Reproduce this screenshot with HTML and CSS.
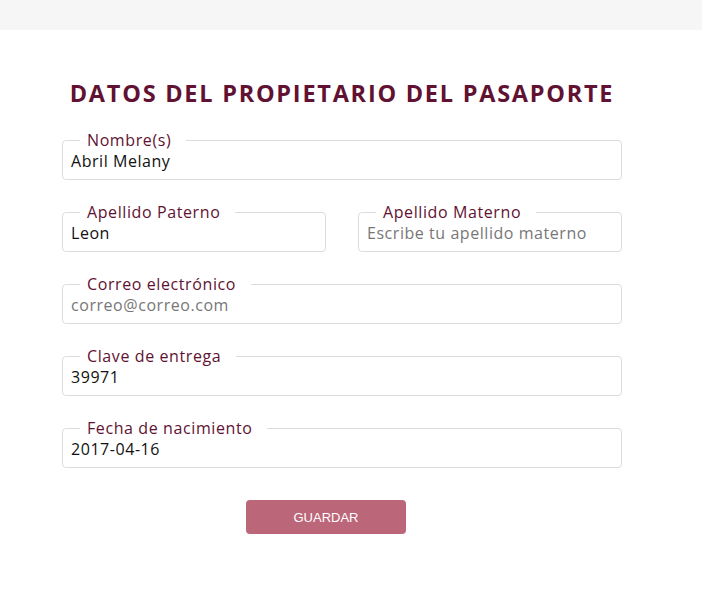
FILE: index.html
```html
<!DOCTYPE html>
<html lang="es">
<head>
<meta charset="utf-8">
<title>Datos del propietario</title>
<link rel="stylesheet" href="styles.css">
</head>
<body>
<div class="topbar"></div>
<main class="main">
  <h1 class="title">DATOS DEL PROPIETARIO DEL PASAPORTE</h1>
  <form class="form">
    <fieldset class="field">
      <legend class="label">Nombre(s)</legend>
      <input class="input" type="text" value="Abril Melany">
    </fieldset>
    <div class="row">
      <fieldset class="field">
        <legend class="label">Apellido Paterno</legend>
        <input class="input" type="text" value="Leon">
      </fieldset>
      <fieldset class="field">
        <legend class="label">Apellido Materno</legend>
        <input class="input" type="text" placeholder="Escribe tu apellido materno">
      </fieldset>
    </div>
    <fieldset class="field">
      <legend class="label">Correo electrónico</legend>
      <input class="input" type="email" placeholder="correo@correo.com">
    </fieldset>
    <fieldset class="field">
      <legend class="label">Clave de entrega</legend>
      <input class="input" type="text" value="39971">
    </fieldset>
    <fieldset class="field">
      <legend class="label">Fecha de nacimiento</legend>
      <input class="input" type="text" value="2017-04-16">
    </fieldset>
    <div class="actions">
      <button class="btn" type="button">GUARDAR</button>
    </div>
  </form>
</main>
</body>
</html>
```
FILE: styles.css
```css
* { box-sizing: border-box; }
body {
  margin: 0;
  background: #fff;
  font-family: "Open Sans", "DejaVu Sans", sans-serif;
  color: #000;
}
.topbar {
  height: 30px;
  background: #f6f6f6;
}
.main {
  padding: 0 80px 0 62px;
}
.title {
  margin: 49px 0 0;
  font-size: 23.5px;
  line-height: 28px;
  font-weight: 700;
  text-align: center;
  color: #611232;
  letter-spacing: 1.75px;
}
.form {
  margin-top: 23px;
  display: flex;
  flex-direction: column;
  gap: 22px;
}
.row {
  display: grid;
  grid-template-columns: 1fr 1fr;
  gap: 32px;
}
.field {
  margin: 0;
  min-width: 0;
  border: 1px solid #dcdcdc;
  border-radius: 4px;
  padding: 0 8px 8px;
}
.label {
  margin-left: 9px;
  padding: 0 15px 0 7px;
  font-size: 16px;
  line-height: 20px;
  font-weight: 500;
  color: #611232;
  letter-spacing: 0.6px;
}
.input {
  display: block;
  width: 100%;
  height: 21px;
  border: 0;
  padding: 0;
  outline: none;
  background: transparent;
  font-family: inherit;
  font-size: 16px;
  letter-spacing: 0.55px;
  color: #111;
}
.input::placeholder {
  color: #777;
}
.actions {
  margin-top: 10px;
  padding-left: 184px;
}
.btn {
  width: 160px;
  height: 34px;
  border: 0;
  border-radius: 4px;
  background: #bb6679;
  color: #fff;
  font-family: "Liberation Sans", Arial, sans-serif;
  font-size: 13px;
}
```
